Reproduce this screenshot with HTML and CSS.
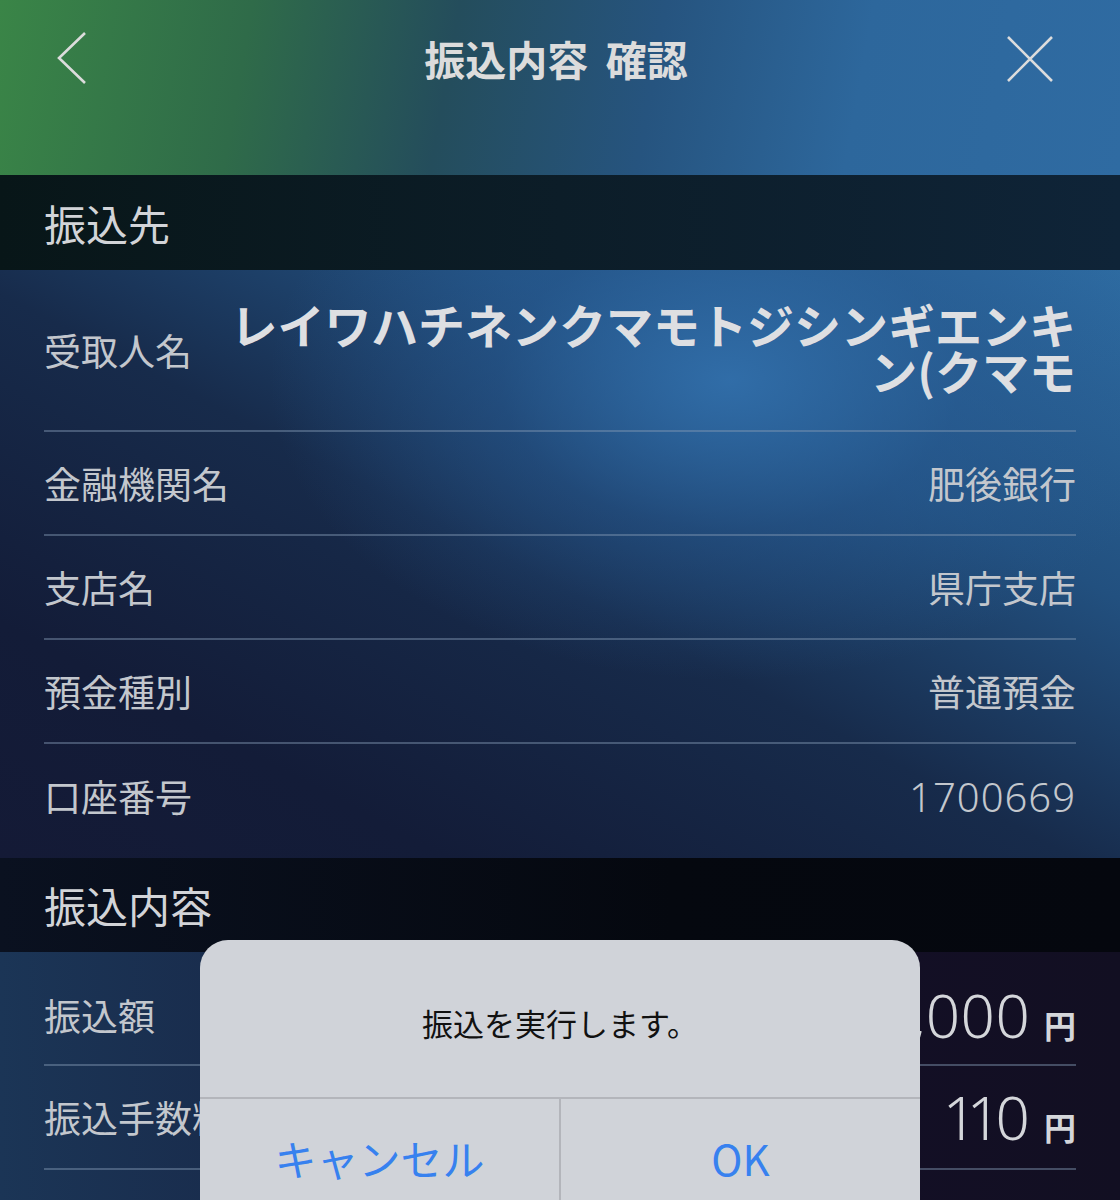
FILE: index.html
```html
<!DOCTYPE html>
<html>
	<head>
		<meta charset="UTF-8">
		<title>振込内容 確認</title>
		<link rel="stylesheet" href="styles.css">
	</head>
	<body>
		<div class="screen">
			<div class="header">
				<span class="navBtn backBtn">
					<svg width="32" height="54" viewBox="0 0 32 54"><polyline points="29,2 3,27 29,52" fill="none" stroke="#dcdcdc" stroke-width="2.6"/></svg>
				</span>
				<h1 class="title">振込内容 確認</h1>
				<span class="navBtn closeBtn">
					<svg width="48" height="48" viewBox="0 0 48 48"><path d="M2 2 L46 46 M46 2 L2 46" fill="none" stroke="#dcdcdc" stroke-width="2.6"/></svg>
				</span>
			</div>

			<div class="sectionHead headTo">振込先</div>
			<ul class="rows rowsTo">
				<li class="row nameRow">
					<span class="label">受取人名</span>
					<span class="value nameValue">レイワハチネンクマモトジシンギエンキン(クマモ</span>
				</li>
				<li class="row"><span class="label">金融機関名</span><span class="value">肥後銀行</span></li>
				<li class="row"><span class="label">支店名</span><span class="value">県庁支店</span></li>
				<li class="row"><span class="label">預金種別</span><span class="value">普通預金</span></li>
				<li class="row last"><span class="label">口座番号</span><span class="value num">1700669</span></li>
			</ul>

			<div class="sectionHead headContent">振込内容</div>
			<ul class="rows rowsContent">
				<li class="row amountRow"><span class="label">振込額</span><span class="value"><span class="big">10,000</span><span class="yen">円</span></span></li>
				<li class="row"><span class="label">振込手数料</span><span class="value"><span class="big">110</span><span class="yen">円</span></span></li>
			</ul>

			<!-- 確認ダイアログ -->
			<div class="alert">
				<p class="alertMsg">振込を実行します。</p>
				<div class="alertBtns">
					<span class="alertBtn">キャンセル</span>
					<span class="alertBtn">OK</span>
				</div>
			</div>
		</div>
	</body>
</html>
```

FILE: styles.css
```css
*{
	margin: 0px;
	padding: 0px;
}
body{
	width: 1120px;
	height: 1200px;
	overflow: hidden;
	background: #111a33;
	font-family: "Noto Sans CJK JP", "Noto Sans", sans-serif;
}
.screen{
	position: relative;
	width: 1120px;
	height: 1200px;
	overflow: hidden;
}
.header{
	height: 175px;
	box-sizing: border-box;
	padding: 30px 66px 0 56px;
	display: flex;
	justify-content: space-between;
	align-items: flex-start;
	background: linear-gradient(100deg, #3a8547 0%, #2f6b49 22%, #244d5c 40%, #26547f 58%, #2d679c 76%, #2f6ba2 100%);
}
.navBtn{
	display: block;
}
.backBtn{
	padding-top: 1px;
}
.closeBtn{
	padding-top: 5px;
}
.title{
	font-size: 41px;
	font-weight: bold;
	color: #dcdcdc;
	line-height: 56px;
	word-spacing: 8px;
	margin-left: 18px;
}
.sectionHead{
	height: 95px;
	line-height: 95px;
	padding-left: 44px;
	font-size: 42px;
	color: #d2d4d8;
}
.headTo{
	background: linear-gradient(to right, #081618, #0c1d28 50%, #0f2438);
}
.headContent{
	height: 94px;
	line-height: 94px;
	background: linear-gradient(to right, #0a1120, #05080f 60%, #05070e);
}
.rows{
	list-style: none;
	padding: 0 44px;
}
.rowsTo{
	padding-bottom: 10px;
	background:
		radial-gradient(ellipse 460px 300px at 730px 110px, rgba(50,112,172,0.9), rgba(40,92,150,0.45) 50%, rgba(30,60,110,0) 100%),
		linear-gradient(to bottom left, #2e6ca2 0%, #22507f 28%, #172b4b 52%, #131c38 80%, #141a36 100%);
}
.rowsContent{
	height: 248px;
	background: linear-gradient(to right, #1b3556 0%, #172444 40%, #130f25 80%, #120f22 100%);
}
.row{
	display: flex;
	justify-content: space-between;
	align-items: center;
	height: 104px;
	border-bottom: 2px solid rgba(130,152,180,0.45);
	box-sizing: border-box;
}
.row.last{
	border-bottom: none;
}
.label{
	font-size: 37px;
	color: #c3c7cd;
	white-space: nowrap;
}
.value{
	font-size: 37px;
	color: #c3c7cd;
	text-align: right;
}
.nameRow{
	height: 162px;
}
.nameValue{
	width: 856px;
	font-size: 47px;
	font-weight: bold;
	line-height: 46px;
	color: #dedfe2;
	margin-top: -6px;
}
.num{
	font-family: "Noto Sans", sans-serif;
	font-weight: 300;
	font-size: 40px;
	letter-spacing: 1px;
}
.amountRow{
	height: 114px;
	padding-top: 14px;
}
.big{
	font-family: "Noto Sans", sans-serif;
	font-weight: 300;
	font-size: 60px;
	color: #d4d6da;
	font-variant-numeric: proportional-nums;
}
.yen{
	font-size: 32px;
	font-weight: bold;
	margin-left: 14px;
	color: #d4d6da;
}
.alert{
	position: absolute;
	left: 200px;
	top: 940px;
	width: 720px;
	height: 300px;
	border-radius: 28px;
	background: #d0d3d9;
	overflow: hidden;
}
.alertMsg{
	height: 157px;
	line-height: 166px;
	text-align: center;
	font-size: 31px;
	color: #111;
	border-bottom: 2px solid #b3b5bb;
}
.alertBtns{
	display: flex;
}
.alertBtn{
	flex: 1;
	height: 120px;
	line-height: 118px;
	text-align: center;
	font-size: 42px;
	color: #3781ef;
}
.alertBtn + .alertBtn{
	border-left: 2px solid #b3b5bb;
}
```
